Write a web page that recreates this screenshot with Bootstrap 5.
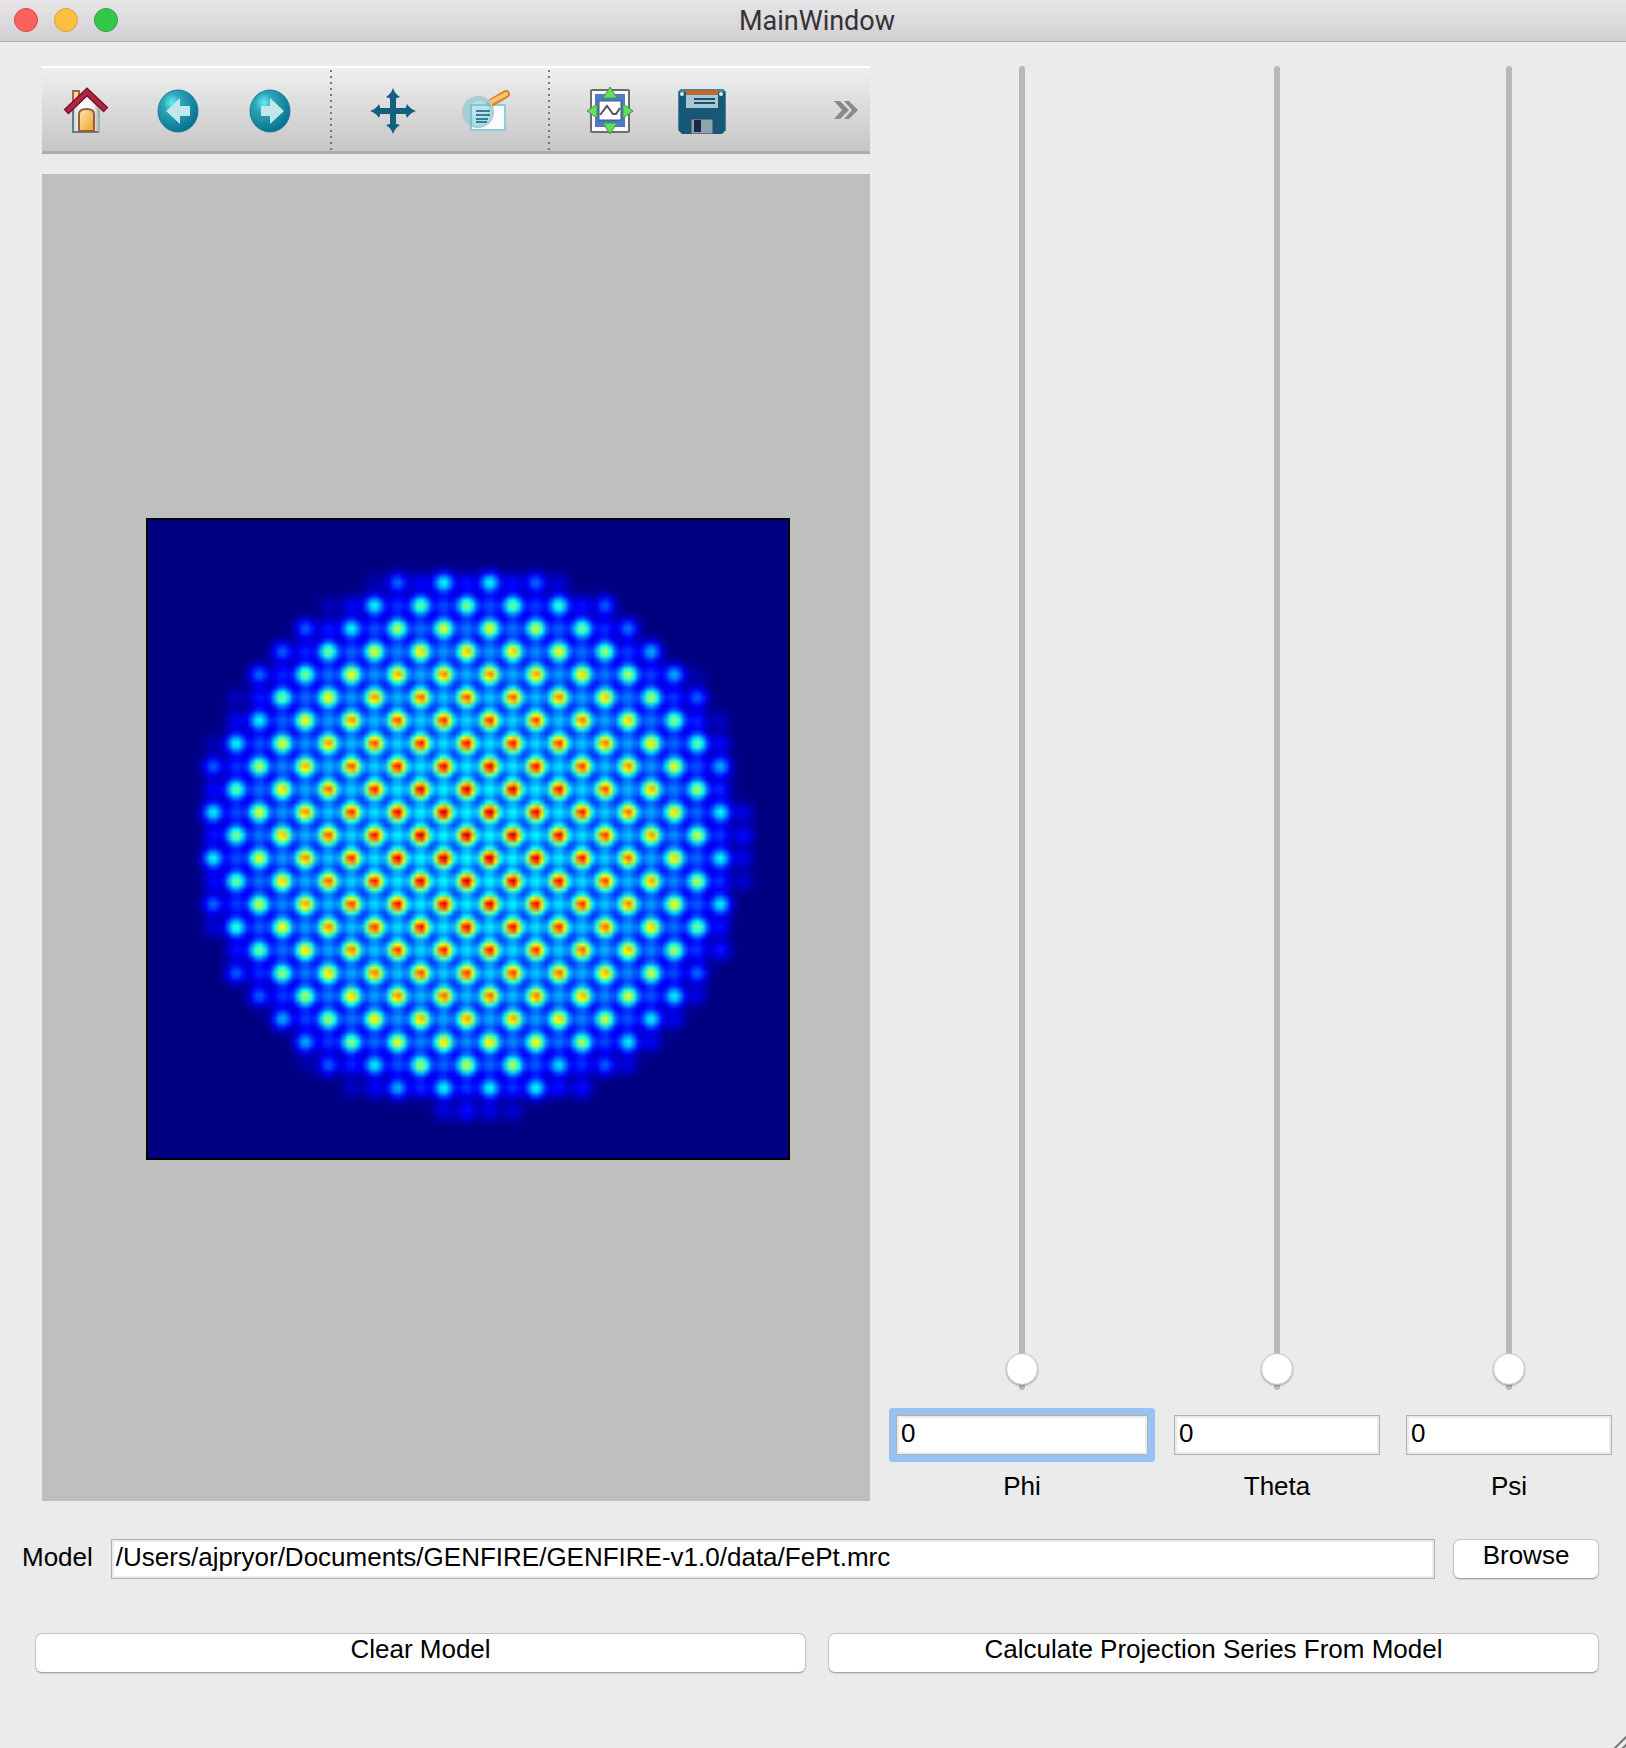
<!DOCTYPE html>
<html lang="en">
<head>
<meta charset="utf-8">
<meta name="viewport" content="width=device-width, initial-scale=1">
<title>MainWindow</title>
<link href="https://cdn.jsdelivr.net/npm/bootstrap@5.3.0/dist/css/bootstrap.min.css" rel="stylesheet">
<style>
  body { background: #ebebeb; color: #000; font-family: "Liberation Sans", Arial, sans-serif; font-size: 26px; line-height: 30px; }
  .titlebar { height: 42px; background: linear-gradient(#e8e6e9, #d1cfd2); border-bottom: 1px solid #b0aeb1; padding: 0 6px 0 14px; }
  .titlebar h1 { font: 400 27px/36px Roboto, sans-serif; color: #343236; }
  .lights { gap: 16px; flex: 1 1 0; padding-bottom: 1px; }
  .light { width: 24px; height: 24px; border-radius: 50%; border: 1px solid; padding: 0; }
  .light-close { background: #fc625d; border-color: #e2463f; }
  .light-min { background: #fdbe41; border-color: #e0a031; }
  .light-max { background: #34c84a; border-color: #24a835; }

  .workspace { display: grid; grid-template-columns: 828fr 252fr 206fr 206fr; column-gap: 26px; padding: 24px 14px 0 42px; }
  .tools { height: 88px; gap: 32px; padding-left: 14px; padding-right: 12px; background: linear-gradient(#efefef, #c6c6c6); border-top: 2px solid #fff; border-bottom: 3px solid #adadad; }
  .tool { width: 60px; height: 60px; padding: 0; border: 0; background: none; display: flex; align-items: center; justify-content: center; }
  .tool-wide { width: 64px; }
  .tool-more { width: 24px; margin-left: auto; }
  .tool-sep { width: 2px; height: 80px; margin: 0 -2px; background: repeating-linear-gradient(#777 0 2px, transparent 2px 6px); }
  .figure-pane { background: #bfbfbf; margin-top: 20px; padding: 3px 80px 0 104px; }
  .figure-pane canvas { width: 100%; aspect-ratio: 644 / 642; border: 2px solid #000; }

  .angle { text-align: center; }
  .vslider { -webkit-appearance: none; appearance: none; writing-mode: vertical-lr; direction: rtl; width: 32px; flex: 1 1 0; min-height: 200px; margin: 0 0 25px; padding: 5px 0; background: none; position: relative; }
  .vslider::before { content: ""; position: absolute; z-index: -1; left: 13px; top: 0; bottom: 0; width: 6px; border-radius: 3px; background: #b8b8b8; }
  .vslider::-webkit-slider-thumb { -webkit-appearance: none; width: 32px; height: 32px; border-radius: 50%; background: #fff; border: 1px solid #c8c8c8; box-shadow: 0 1px 2px rgba(0,0,0,.3); }
  .field { height: 40px; width: 100%; min-width: 0; padding: 0 4px 4px; border: 1px solid #b0b0b0; border-radius: 0; background: #fff; box-shadow: inset 0 0 0 2px #ebebeb; color: #000; outline: 0; }
  .field:focus { box-shadow: inset 0 0 0 2px #ebebeb, 0 0 0 7px #97c2f2; border-radius: 1px; }
  .angle label { margin-top: 16px; }

  .model-row { padding: 38px 27px 0 22px; gap: 18px; }
  .model-row label { padding-top: 3px; }
  .push { height: 40px; padding: 0 0 8px; font-size: 26px; line-height: 30px; color: #000; background: #fff; border: 1px solid #c4c4c4; border-bottom-color: #a8a8a8; border-radius: 7px; box-shadow: 0 1px 1px rgba(0,0,0,.12); }
  .push-browse { width: 146px; flex: none; }
  .action-row { padding: 54px 27px 75px 35px; gap: 22px; }
  .grip { position: absolute; right: 0; bottom: 0; }
</style>
</head>
<body>
<div class="d-flex flex-column min-vh-100 position-relative">
  <header class="titlebar d-flex align-items-center">
    <div class="lights d-flex">
      <button class="light light-close" type="button" aria-label="Close"></button>
      <button class="light light-min" type="button" aria-label="Minimize"></button>
      <button class="light light-max" type="button" aria-label="Zoom window"></button>
    </div>
    <h1 class="m-0">MainWindow</h1>
    <div class="lights"></div>
  </header>

  <main class="d-flex flex-column flex-grow-1">
    <div class="workspace flex-grow-1">
      <section class="d-flex flex-column">
        <div class="tools d-flex align-items-center" role="toolbar" aria-label="Plot tools">
          <button class="tool" type="button" aria-label="Home">
            <svg width="48" height="48" viewBox="0 0 48 48">
              <defs>
                <linearGradient id="door" x1="0" y1="0" x2="1" y2="1"><stop offset="0" stop-color="#fbe6b8"/><stop offset="1" stop-color="#eda51e"/></linearGradient>
                <linearGradient id="wall"><stop offset="0" stop-color="#c9cfcf"/><stop offset=".3" stop-color="#fff"/><stop offset=".8" stop-color="#f1f1f1"/><stop offset="1" stop-color="#9fb0b2"/></linearGradient>
                <radialGradient id="orb" cx=".35" cy=".3" r=".75"><stop offset="0" stop-color="#5ff3f3"/><stop offset=".3" stop-color="#2fa5b8"/><stop offset="1" stop-color="#04708f"/></radialGradient>
              </defs>
              <rect x="11" y="5" width="6" height="15" fill="#f8d9a0" stroke="#a2694c" stroke-width="2"/>
              <path d="M11 22 25 9l12 13v24H11z" fill="url(#wall)"/>
              <path d="M11 22v24h26" fill="none" stroke="#5f7f82" stroke-width="2"/>
              <path d="M37 24v22" stroke="#9fb0b2" stroke-width="2"/>
              <path d="M17 45V28q0-5 7.500-5t7.500 5v17z" fill="url(#door)" stroke="#9b5a3c" stroke-width="2"/>
              <path d="M4 26 25 6 44 24" fill="none" stroke="#7d1129" stroke-width="7"/>
              <path d="M5 25 25 6 43 23" fill="none" stroke="#b02544" stroke-width="4"/>
            </svg>
          </button>
          <button class="tool" type="button" aria-label="Back">
            <svg width="48" height="48" viewBox="0 0 48 48"><ellipse cx="24" cy="25" rx="20" ry="21" fill="url(#orb)" stroke="#1b7f99"/><path d="M12 25 26 12v8h10v10H26v8z" fill="#c3e6ec"/></svg>
          </button>
          <button class="tool" type="button" aria-label="Forward">
            <svg width="48" height="48" viewBox="0 0 48 48"><ellipse cx="24" cy="25" rx="20" ry="21" fill="url(#orb)" stroke="#1b7f99"/><path d="M38 25 24 12v8h-9v10h9v8z" fill="#c3e6ec"/></svg>
          </button>
          <div class="tool-sep"></div>
          <button class="tool" type="button" aria-label="Pan">
            <svg width="48" height="48" viewBox="0 0 48 48" fill="#14607f"><path d="M22 8h6v34h-6zM8 22h34v6H8z"/><path d="M25 2q2 6 7 9-7 3-14 0 5-3 7-9zM25 48q2-6 7-9-7-3-14 0 5 3 7 9zM2 25q6-2 9-7 3 7 0 14-3-5-9-7zM48 25q-6-2-9-7-3 7 0 14 3-5 9-7z"/></svg>
          </button>
          <button class="tool tool-wide" type="button" aria-label="Zoom to rectangle">
            <svg width="48" height="48" viewBox="0 0 48 48">
              <rect x="9" y="19" width="34" height="25" fill="#fafaff" stroke="#8ccfd8" stroke-width="2"/>
              <path d="M29 17 44 8" stroke="#d98436" stroke-width="8" stroke-linecap="round"/><path d="M29 16 44 8" stroke="#fbc468" stroke-width="4" stroke-linecap="round"/>
              <circle cx="16" cy="26" r="15" fill="#8bc9d2" fill-opacity=".65" stroke="#a5cdd6" stroke-width="2"/>
              <circle cx="17" cy="24" r="9" fill="#c8eef0" opacity=".5"/>
              <path d="M9 42V19h19" fill="none" stroke="#6fbcc9" stroke-width="2" opacity=".7"/>
              <path d="M14 25h14M14 29h14M14 33h12M14 36h11" stroke="#317f99" stroke-width="2"/>
            </svg>
          </button>
          <div class="tool-sep"></div>
          <button class="tool" type="button" aria-label="Configure subplots">
            <svg width="48" height="48" viewBox="0 0 48 48">
              <rect x="5" y="4" width="38" height="42" rx="1" fill="#fafafa" stroke="#6c6c6c" stroke-width="2"/>
              <rect x="9" y="8" width="30" height="33" fill="#4f79c4"/>
              <rect x="13" y="15" width="22" height="19" fill="#fff" stroke="#34569b"/>
              <path d="M14 29l7-9 6 8 3 0 4-6" fill="none" stroke="#555" stroke-width="2"/>
              <path d="M24 1l7 11H17zM24 48l7-11H17zM1 25l10-7v14zM47 25l-10-7v14z" fill="#5fe35b" stroke="#4b8f49"/>
            </svg>
          </button>
          <button class="tool" type="button" aria-label="Save">
            <svg width="48" height="48" viewBox="0 0 48 48">
              <path d="M3 3h42l3 3v38l-4 4H4l-4-4V6z" fill="#175878"/><path d="M3 3h42l3 3v38l-1 1V6H1v38l-1 0V6z" fill="#3f86a3"/>
              <rect x="8" y="4" width="32" height="5" fill="#bd6a35"/><rect x="8" y="9" width="32" height="13" fill="#a9c7d3"/>
              <path d="M16 13h21M16 17h21" stroke="#17516e" stroke-width="2"/>
              <circle cx="4" cy="8" r="2" fill="#dbe8ec"/><circle cx="43" cy="8" r="2" fill="#dbe8ec"/>
              <rect x="13" y="33" width="22" height="15" fill="#8ea3ae" stroke="#2b4a63"/><rect x="16" y="34" width="7" height="12" fill="#19274a"/>
            </svg>
          </button>
          <button class="tool tool-more" type="button" aria-label="More tools">
            <svg width="24" height="20" viewBox="0 0 24 20" fill="#8a8a8a"><path d="M0 1h6l9 9-9 9H0l8-9zM10 1h5l9 9-9 9h-5l8-9z"/></svg>
          </button>
        </div>
        <div class="figure-pane flex-grow-1 d-flex align-items-center">
          <canvas id="projection" width="139" height="139" role="img" aria-label="Projection of the model"></canvas>
        </div>
      </section>

      <div class="angle d-flex flex-column align-items-center">
        <input class="vslider" type="range" min="0" max="360" value="0" aria-label="Phi slider">
        <input class="field" id="phi" type="text" value="0" autofocus>
        <label for="phi">Phi</label>
      </div>
      <div class="angle d-flex flex-column align-items-center">
        <input class="vslider" type="range" min="0" max="360" value="0" aria-label="Theta slider">
        <input class="field" id="theta" type="text" value="0">
        <label for="theta">Theta</label>
      </div>
      <div class="angle d-flex flex-column align-items-center">
        <input class="vslider" type="range" min="0" max="360" value="0" aria-label="Psi slider">
        <input class="field" id="psi" type="text" value="0">
        <label for="psi">Psi</label>
      </div>
    </div>

    <div class="model-row d-flex">
      <label for="model">Model</label>
      <input class="field" id="model" type="text" value="/Users/ajpryor/Documents/GENFIRE/GENFIRE-v1.0/data/FePt.mrc">
      <button class="btn push push-browse" type="button">Browse</button>
    </div>
    <div class="action-row d-flex">
      <button class="btn push w-50" type="button">Clear Model</button>
      <button class="btn push w-50" type="button">Calculate Projection Series From Model</button>
    </div>
  </main>
  <svg class="grip" width="12" height="12" viewBox="0 0 12 12" stroke="#777" stroke-width="2"><path d="M0 13 13 0M8 13l5-5"/></svg>
</div>

<script src="https://cdn.jsdelivr.net/npm/bootstrap@5.3.0/dist/js/bootstrap.bundle.min.js"></script>
<script>
  // Projected density of a spherical FePt particle: a checkerboard of heavy and
  // light atom columns, each as strong as the sphere is thick at that point.
  const N = 139, RADIUS = 12.2, CENTER = 0.3, SIGMA = 1.55;
  const STEP_X = 5.008, STEP_Y = 5.006, X0 = 69.2, Y0 = 68.7;
  // Columns on the rim, [column, row, strength]
  const rim = [
    [-3,-11,.23],[-1,-11,.38],[1,-11,.38],[3,-11,.23],[-6,-10,.06],[-4,-10,.38],[6,-10,.22],[-7,-9,.22],[-5,-9,.38],[7,-9,.24],
    [-8,-8,.22],[8,-8,.3],[-9,-7,.23],[9,-7,.3],[-10,-6,.06],[10,-6,.22],[-9,-5,.38],[11,-5,.07],[-10,-4,.38],
    [-11,-3,.22],[11,-3,.3],[-11,-1,.37],[11,-1,.38],[-11,1,.38],[11,1,.38],[-11,3,.23],[11,3,.37],[11,5,.15],
    [-10,6,.22],[10,6,.23],[-9,7,.22],[9,7,.37],[-8,8,.3],[8,8,.37],[-7,9,.3],[7,9,.37],[-6,10,.22],[6,10,.22],[4,10,.35],[-4,10,.37],
    [-5,11,.07],[-3,11,.3],[-1,11,.38],[1,11,.38],[3,11,.38],[5,11,.14],[0,12,.14],[2,12,.08],[12,0,.13],[12,2,.08],
    [-3,12,0],[3,12,0],[12,-3,0],[12,3,0],[8,-9,0],[9,-8,0],[-9,8,0],[-8,9,0],[11,6,0],[6,11,0]
  ];
  const known = new Map(rim.map(([k, r, a]) => [k + ',' + r, a]));
  const atoms = [];
  for (let r = -12; r <= 12; r++) for (let k = -12; k <= 12; k++) {
    const d = Math.hypot(k - CENTER, r - CENTER);
    const heavy = (k + r) % 2 === 0;
    const thickness = Math.sqrt(Math.max(0, 1 - d * d / (RADIUS * RADIUS)));
    let a = heavy ? (d < 11.25 ? 0.96 * thickness : 0) : 0.37 * thickness;
    if (known.has(k + ',' + r)) a = known.get(k + ',' + r);
    if (a > 0) atoms.push([X0 + k * STEP_X, Y0 + r * STEP_Y, a]);
  }
  const density = new Float32Array(N * N);
  for (const [x, y, a] of atoms)
    for (let j = Math.max(0, Math.floor(y - 8)); j < Math.min(N, y + 8); j++)
      for (let i = Math.max(0, Math.floor(x - 8)); i < Math.min(N, x + 8); i++)
        density[j * N + i] += a * Math.exp(-((i + .5 - x) ** 2 + (j + .5 - y) ** 2) / (2 * SIGMA * SIGMA));
  const ctx = document.getElementById('projection').getContext('2d');
  const img = ctx.createImageData(N, N);
  const jet = (v, c) => 255 * Math.min(1, Math.max(0, 1.5 - Math.abs(4 * v - c)));
  density.forEach((v, p) => {
    v = Math.min(v, 1);
    img.data.set([jet(v, 3), jet(v, 2), jet(v, 1), 255], p * 4);
  });
  ctx.putImageData(img, 0, 0);
  document.getElementById('phi').focus();
  document.getElementById('phi').setSelectionRange(1, 1);
</script>
</body>
</html>
